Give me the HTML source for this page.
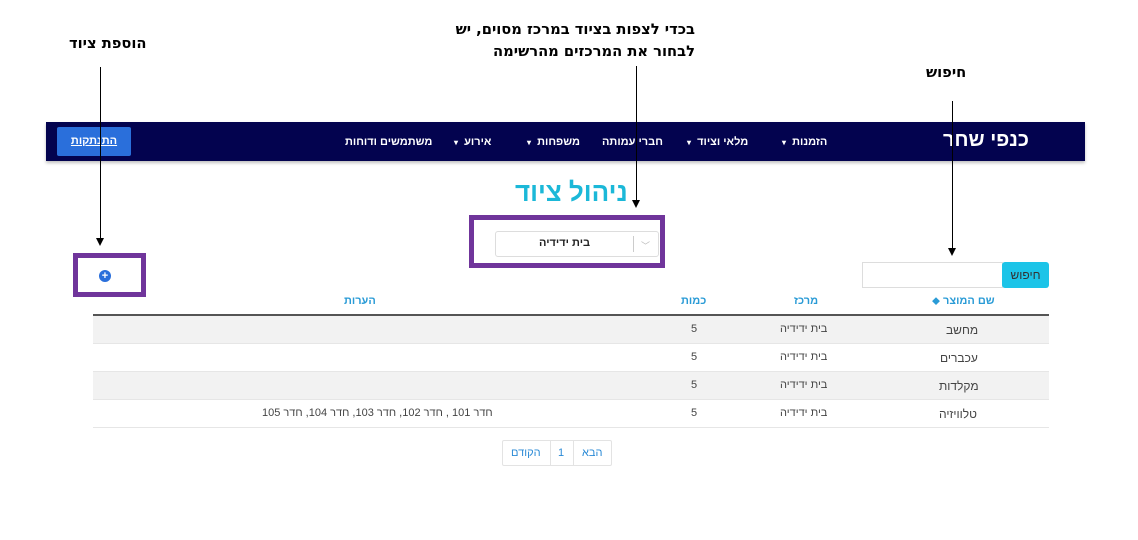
<!DOCTYPE html>
<html><head><meta charset="utf-8">
<style>
*{margin:0;padding:0;box-sizing:border-box}
body{width:1138px;height:540px;background:#fff;position:relative;overflow:hidden;font-family:"Liberation Sans","Noto Sans CJK SC",sans-serif;direction:rtl}
.a{position:absolute;white-space:nowrap}
.ann{font-family:"DejaVu Sans",sans-serif;font-weight:bold;font-size:14.7px;color:#000}
.vl{position:absolute;width:1px;background:#000}
.ah{position:absolute;width:0;height:0;border-left:4px solid transparent;border-right:4px solid transparent;border-top:8px solid #000}
.nav{position:absolute;left:46px;top:122px;width:1039px;height:39px;background:#03034f;box-shadow:0 2px 3px rgba(0,0,0,.25)}
.ni{position:absolute;top:136px;color:#fff;font-size:11px;font-weight:bold}
.ca{font-size:8px}
.th{position:absolute;top:295px;color:#2a9bd6;font-size:11px;font-weight:bold}
.row{position:absolute;left:93px;width:956px;height:28px;border-bottom:1px solid #e6e6e6}
.td{position:absolute;font-size:11px;color:#444}
</style></head><body>
<div class="a ann" style="left:69px;top:35px">הוספת ציוד</div>
<div class="vl" style="left:100px;top:67px;height:172px"></div>
<div class="ah" style="left:96px;top:238px"></div>
<div class="a ann" style="right:443px;top:19px;text-align:right;line-height:22px">בכדי לצפות בציוד במרכז מסוים, יש<br>לבחור את המרכזים מהרשימה</div>
<div class="vl" style="left:636px;top:66px;height:135px"></div>
<div class="ah" style="left:632px;top:200px"></div>
<div class="a ann" style="left:926px;top:64px">חיפוש</div>
<div class="vl" style="left:952px;top:101px;height:148px"></div>
<div class="ah" style="left:948px;top:248px"></div>

<div class="nav"></div>
<div class="a" style="left:57px;top:127px;width:74px;height:29px;background:#2a6fdb;border-radius:2px;color:#fff;font-size:11px;font-weight:bold;text-align:center;line-height:29px;text-decoration:underline">התנתקות</div>
<div class="ni" style="left:345px">משתמשים ודוחות</div>
<div class="ni" style="left:454px">אירוע &nbsp;<span class="ca">▾</span></div>
<div class="ni" style="left:527px">משפחות &nbsp;<span class="ca">▾</span></div>
<div class="ni" style="left:602px">חברי עמותה</div>
<div class="ni" style="left:687px">מלאי וציוד &nbsp;<span class="ca">▾</span></div>
<div class="ni" style="left:782px">הזמנות &nbsp;<span class="ca">▾</span></div>
<div class="a" style="left:943px;top:129px;color:#fff;font-size:20px;font-weight:bold">כנפי שחר</div>
<div class="vl" style="left:100px;top:115px;height:50px"></div>
<div class="vl" style="left:636px;top:115px;height:50px"></div>
<div class="vl" style="left:952px;top:115px;height:50px"></div>

<div class="a" style="left:515px;top:177px;color:#1bb8d8;font-size:26px;font-weight:bold">ניהול ציוד</div>
<div class="a" style="left:469px;top:215px;width:196px;height:53px;border:5px solid #70359b"></div>
<div class="a" style="left:495px;top:231px;width:164px;height:26px;border:1px solid #ddd;border-radius:3px"></div>
<div class="a" style="left:539px;top:237px;font-size:11px;font-weight:bold;color:#222">בית ידידיה</div>
<div class="a" style="left:633px;top:236px;width:1px;height:16px;background:#ccc"></div>
<div class="a" style="left:641px;top:239px;font-size:9px;color:#bbb">﹀</div>

<div class="a" style="left:73px;top:253px;width:73px;height:44px;border:5px solid #70359b"></div>
<div class="a" style="left:99px;top:270px;width:12px;height:12px;border-radius:50%;background:#2a6fdb;color:#fff;font-size:11px;font-weight:bold;line-height:12px;text-align:center">+</div>

<div class="a" style="left:862px;top:262px;width:141px;height:26px;border:1px solid #ddd"></div>
<div class="a" style="left:1002px;top:262px;width:47px;height:26px;background:#1cc4e8;border-radius:3px;color:#333;font-size:12px;line-height:26px;text-align:center">חיפוש</div>

<div class="th" style="left:932px">שם המוצר <span style="font-size:8px">◆</span></div>
<div class="th" style="left:794px">מרכז</div>
<div class="th" style="left:681px">כמות</div>
<div class="th" style="left:344px">הערות</div>
<div class="a" style="left:93px;top:314px;width:956px;height:2px;background:#555"></div>

<div class="row" style="top:316px;background:#f2f2f2"></div>
<div class="row" style="top:344px"></div>
<div class="row" style="top:372px;background:#f2f2f2"></div>
<div class="row" style="top:400px"></div>

<div class="td" style="left:946px;top:323px;font-size:12px">מחשב</div>
<div class="td" style="left:940px;top:351px;font-size:12px">עכברים</div>
<div class="td" style="left:939px;top:379px;font-size:12px">מקלדות</div>
<div class="td" style="left:939px;top:407px;font-size:12px">טלוויזיה</div>
<div class="td" style="left:780px;top:323px">בית ידידיה</div>
<div class="td" style="left:780px;top:351px">בית ידידיה</div>
<div class="td" style="left:780px;top:379px">בית ידידיה</div>
<div class="td" style="left:780px;top:407px">בית ידידיה</div>
<div class="td" style="left:691px;top:323px">5</div>
<div class="td" style="left:691px;top:351px">5</div>
<div class="td" style="left:691px;top:379px">5</div>
<div class="td" style="left:691px;top:407px">5</div>
<div class="td" style="left:262px;top:407px">חדר 101 , חדר 102, חדר 103, חדר 104, חדר 105</div>

<div class="a" style="left:502px;top:440px;width:110px;height:26px;border:1px solid #e3e3e3;border-radius:2px"></div>
<div class="a" style="left:550px;top:440px;width:24px;height:26px;border-left:1px solid #e3e3e3;border-right:1px solid #e3e3e3"></div>
<div class="a" style="left:511px;top:447px;font-size:11px;color:#2a8ad6">הקודם</div>
<div class="a" style="left:558px;top:447px;font-size:11px;color:#2a8ad6">1</div>
<div class="a" style="left:582px;top:447px;font-size:11px;color:#2a8ad6">הבא</div>
</body></html>
